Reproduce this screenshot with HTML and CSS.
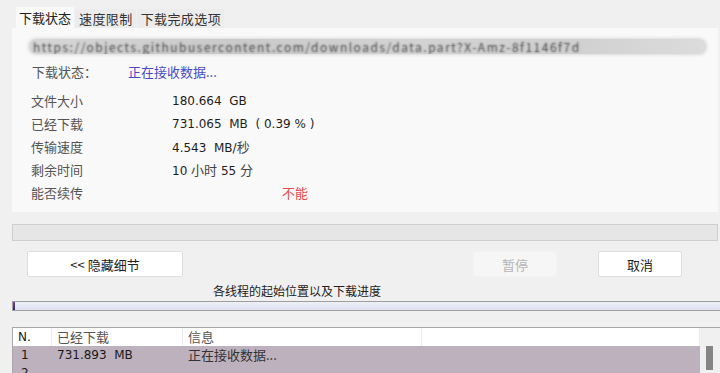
FILE: index.html
```html
<!DOCTYPE html>
<html lang="zh-CN">
<head>
    <meta charset="UTF-8">
    <title>下载状态</title>
    <link rel="stylesheet" href="styles.css">
</head>
<body>

    <div class="tabs">
        <div class="tab active">下载状态</div>
        <div class="tab">速度限制</div>
        <div class="tab">下载完成选项</div>
    </div>

    <div class="panel">
        <div class="url">https://objects.githubusercontent.com/downloads/data.part?X-Amz-8f1146f7d</div>

        <div class="status-row">
            <span class="label">下载状态：</span>
            <span class="status-value">正在接收数据...</span>
        </div>

        <div class="info">
            <span class="label">文件大小</span>
            <span class="value">180.664&nbsp;&nbsp;GB</span>
            <span class="label">已经下载</span>
            <span class="value">731.065&nbsp;&nbsp;MB&nbsp;&nbsp;(&nbsp;0.39&nbsp;%&nbsp;)</span>
            <span class="label">传输速度</span>
            <span class="value">4.543&nbsp;&nbsp;MB/<span class="cjk">秒</span></span>
            <span class="label">剩余时间</span>
            <span class="value">10 <span class="cjk">小时</span> 55 <span class="cjk">分</span></span>
            <span class="label">能否续传</span>
            <span class="value resume">不能</span>
        </div>
    </div>

    <div class="total-bar"></div>

    <div class="actions">
        <button class="btn btn-wide">&lt;&lt; 隐藏细节</button>
        <div class="spacer"></div>
        <button class="btn btn-pause" disabled>暂停</button>
        <button class="btn">取消</button>
    </div>

    <div class="caption">各线程的起始位置以及下载进度</div>
    <div class="thread-bar"><span class="thread-mark"></span></div>

    <div class="threads">
        <div class="thread-table">
            <div class="row head">
                <span class="c-n">N.</span>
                <span class="c-size">已经下载</span>
                <span class="c-info">信息</span>
                <span class="c-rest"></span>
            </div>
            <div class="row sel">
                <span class="c-n">1</span>
                <span class="c-size">731.893&nbsp;&nbsp;MB</span>
                <span class="c-info">正在接收数据...</span>
                <span class="c-rest"></span>
            </div>
            <div class="row sel">
                <span class="c-n">2</span>
                <span class="c-size"></span>
                <span class="c-info"></span>
                <span class="c-rest"></span>
            </div>
        </div>
        <div class="scrollbar"><div class="thumb"></div></div>
    </div>

</body>
</html>
```

FILE: styles.css
```css
:root {
    --window-bg: #f0f0f0;
    --panel-bg: #f9f9f9;
    --label-color: #555555;
    --value-color: #1e1e1e;
    --row-selected: #bdb1bd;
}

body {
    margin: 0;
    padding: 0;
    background-color: var(--window-bg);
    font-family: "Noto Sans CJK SC", "Noto Sans", sans-serif;
    font-size: 13px;
    color: var(--value-color);
    overflow: hidden;
    height: 373px;
}

/* タブ */
.tabs {
    display: flex;
    padding: 7px 0 0 16px;
    height: 21px;
    align-items: flex-end;
}

.tab {
    height: 19px;
    line-height: 19px;
    padding: 0 3px 0 4px;
    margin-right: 1px;
    color: #333;
    background-color: #ececec;
    font-size: 13px;
    letter-spacing: 0.4px;
}

.tab.active {
    height: 21px;
    line-height: 22px;
    padding: 0 3px;
    background-color: var(--panel-bg);
    color: #222;
    letter-spacing: 0;
}

.panel {
    margin: 0 2px 0 12px;
    height: 184px;
    background-color: var(--panel-bg);
    box-sizing: border-box;
    padding: 9px 14px 0 17px;
}

/* ぼかしたURL */
.url {
    width: 677px;
    height: 15px;
    margin-top: 2px;
    line-height: 15px;
    overflow: hidden;
    white-space: nowrap;
    font-size: 12px;
    color: transparent;
    text-shadow: 0 0 2px rgba(60, 60, 60, 0.9);
    background: linear-gradient(90deg, #d6d6d6 0%, #cacaca 30%, #d3d3d3 55%, #d0d0d0 80%, #dcdcdc 100%);
    border-radius: 7px;
    box-shadow: 0 0 3px 1px #dadada;
    letter-spacing: 1.5px;
    padding-left: 4px;
    box-sizing: border-box;
}

.status-row {
    display: flex;
    height: 18px;
    line-height: 18px;
    margin-top: 9px;
    padding-left: 3px;
}

.status-row .label {
    width: 96px;
}

.status-value {
    color: #4a4ac8;
}

.label {
    color: var(--label-color);
}

.info {
    display: grid;
    grid-template-columns: 141px auto;
    grid-auto-rows: 23px;
    align-items: center;
    margin-top: 8px;
    padding-left: 2px;
}

.value {
    font-family: "DejaVu Sans", "Noto Sans CJK SC", sans-serif;
    font-size: 12px;
    color: var(--value-color);
}

.value .cjk {
    font-family: "Noto Sans CJK SC", sans-serif;
    font-size: 13px;
    color: #444;
}

.value.resume {
    font-family: "Noto Sans CJK SC", sans-serif;
    font-size: 13px;
    color: #e84a4a;
    padding-left: 110px;
}

.total-bar {
    margin: 12px 2px 0 12px;
    height: 15px;
    background-color: #e6e6e6;
    border: 1px solid #cfcfcf;
}

.actions {
    display: flex;
    margin: 10px 0 0 27px;
    height: 26px;
}

.btn {
    font-family: "Noto Sans CJK SC", sans-serif;
    font-size: 13px;
    color: #222;
    background-color: #ffffff;
    border: 1px solid #dddddd;
    border-radius: 2px;
    width: 84px;
    height: 26px;
    padding: 0;
}

.btn-wide {
    width: 156px;
}

.spacer {
    flex: 1;
}

.btn-pause {
    background-color: #f6f6f6;
    border-color: #f3f3f3;
    color: #b5b5b5;
    margin-right: 41px;
}

.btn + .btn:last-child {
    margin-right: 38px;
}

.caption {
    height: 18px;
    line-height: 18px;
    margin-top: 5px;
    padding-left: 213px;
    font-size: 12px;
    color: #222;
}

.thread-bar {
    margin: 1px 0 0 12px;
    height: 8px;
    border: 1px solid #9e9e9e;
    border-right: none;
    background: linear-gradient(180deg, #eef0f8 0%, #dfe1f0 100%);
    display: flex;
}

.thread-mark {
    width: 2px;
    background: linear-gradient(180deg, #7a3aa0, #2a2a6a);
}

.threads {
    display: flex;
    margin: 16px 0 0 12px;
    border-top: 1px solid #a8a8a8;
    border-left: 1px solid #a8a8a8;
    height: 46px;
    background-color: #ffffff;
}

.thread-table {
    flex: 1;
}

.row {
    display: flex;
    height: 18px;
    line-height: 18px;
}

.row span {
    box-sizing: border-box;
    padding-left: 5px;
    white-space: nowrap;
}

.row.head span {
    color: #555;
    border-right: 1px solid #ececec;
}

.row.head .c-n {
    color: #222;
    font-family: "DejaVu Sans", sans-serif;
    font-size: 12px;
}

.row.sel {
    background-color: var(--row-selected);
}

.row.sel .c-size,
.row.sel .c-n {
    font-family: "DejaVu Sans", sans-serif;
    font-size: 12px;
    color: #1a1a1a;
}

.row.sel .c-n {
    padding-left: 8px;
}

.row.sel .c-info {
    color: #333;
}

.c-n {
    width: 39px;
}

.c-size {
    width: 131px;
}

.c-info {
    width: 239px;
}

.c-rest {
    flex: 1;
}

.scrollbar {
    width: 20px;
    background-color: #f0f0f0;
    padding: 18px 0 0 6px;
    box-sizing: border-box;
}

.thumb {
    width: 7px;
    height: 24px;
    background-color: #858585;
}
```
